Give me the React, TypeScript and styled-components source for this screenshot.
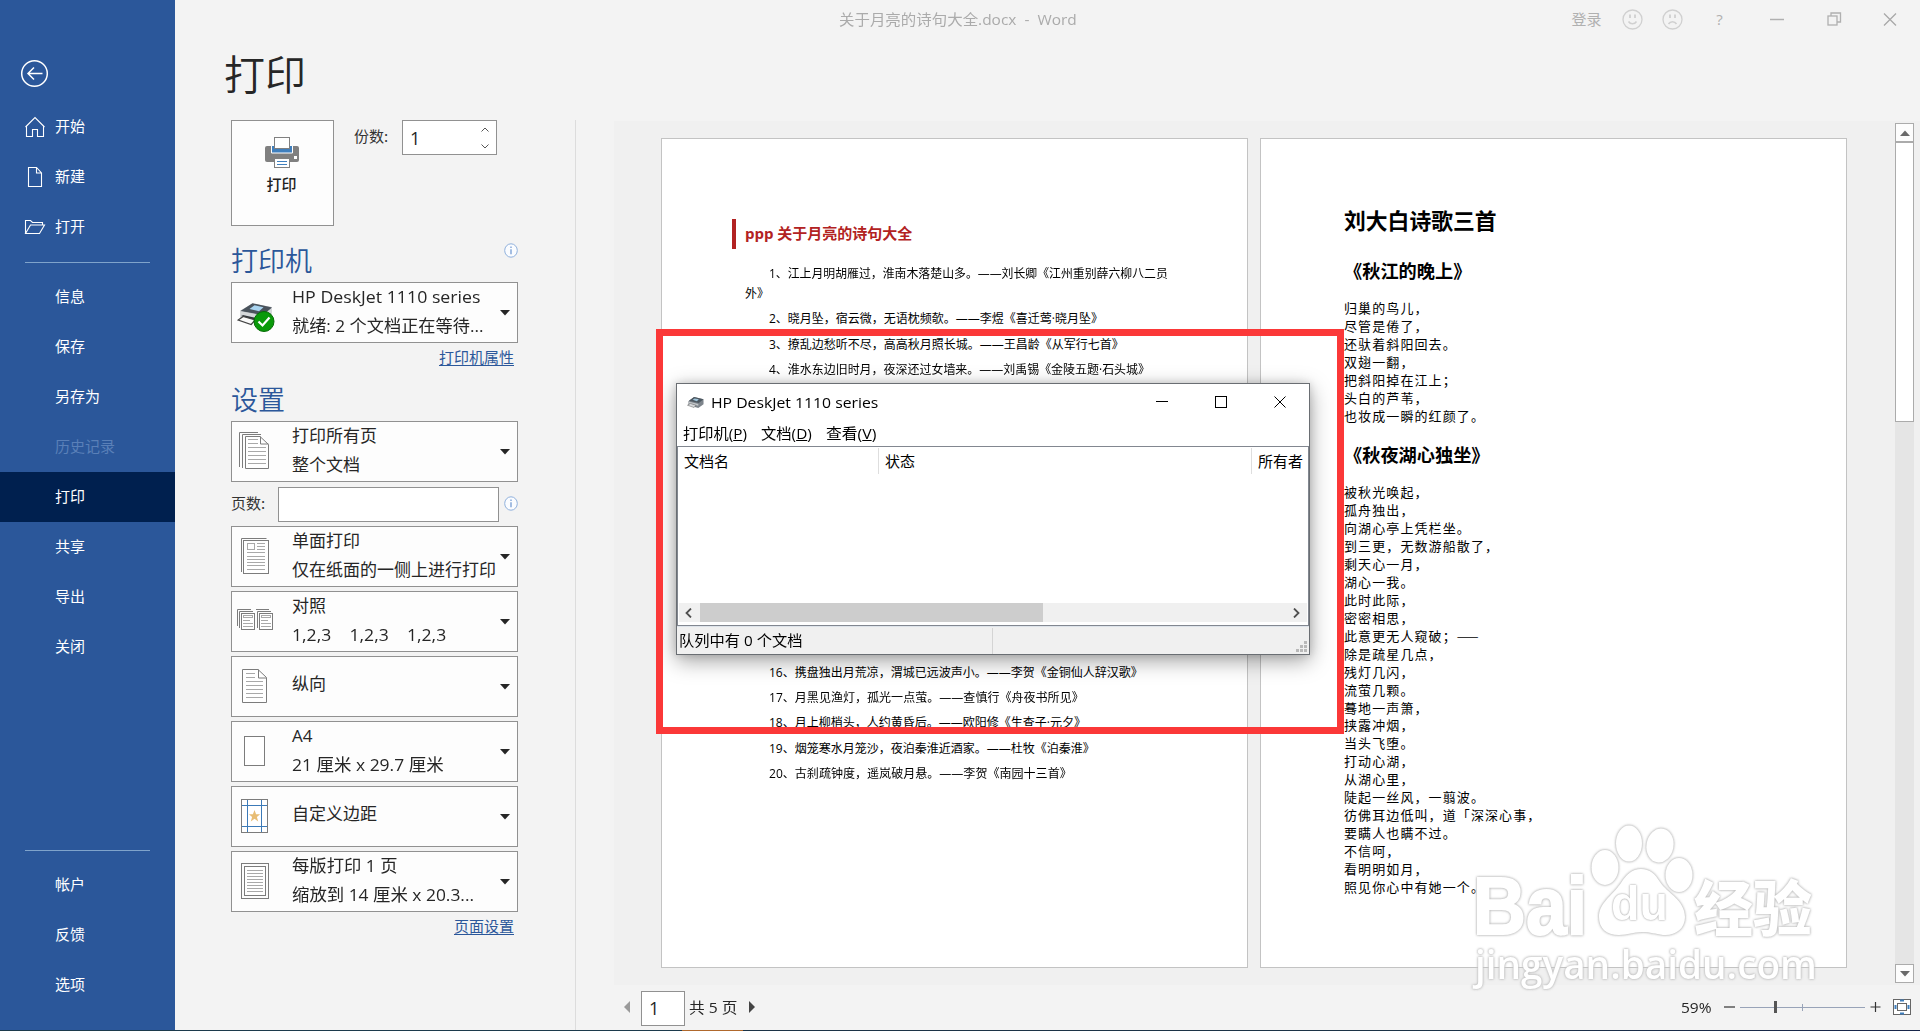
import React, { useLayoutEffect, useRef, useState } from "react";
import styled, { createGlobalStyle } from "styled-components";

const UI = `"Open Sans", "Noto Sans CJK SC", sans-serif`;
const CJK = `"Noto Sans CJK SC", sans-serif`;

const Global = createGlobalStyle`
  * { box-sizing: border-box; }
  html, body { margin: 0; padding: 0; overflow: hidden; background: #f3f3f3; }
  body { font-family: ${UI}; color: #262626; }
  svg { display: block; flex: none; }
`;

/* ---------- text fitted to a known advance width ---------- */
const FitBox = styled.span<{ $w: number }>`
  display: inline-block;
  flex: none;
  width: ${(p) => p.$w}px;
  white-space: pre;
  text-align: left;
`;
const FitInner = styled.span`
  display: inline-block;
  transform-origin: 0 50%;
`;
function Fit({ w, children }: { w: number; children: React.ReactNode }) {
  const ref = useRef<HTMLSpanElement>(null);
  const [scale, setScale] = useState(1);
  useLayoutEffect(() => {
    if (ref.current && ref.current.offsetWidth) setScale(w / ref.current.offsetWidth);
  }, [w]);
  return (
    <FitBox $w={w}>
      <FitInner ref={ref} style={{ transform: `scaleX(${scale})` }}>
        {children}
      </FitInner>
    </FitBox>
  );
}

/* ---------- frame ---------- */
const Screen = styled.div`
  position: relative;
  width: 1920px;
  height: 1031px;
  display: flex;
  flex-direction: column;
  overflow: hidden;
`;
const Shell = styled.div`
  flex: 1;
  min-height: 0;
  display: grid;
  grid-template-columns: 175px 1fr;
`;
const TaskEdge = styled.div`
  height: 1px;
  background: linear-gradient(90deg, #1c3a4c 0 682px, #b0682c 682px 743px, #1c3346 743px 1400px, #17254a);
`;

/* ---------- sidebar ---------- */
const Sidebar = styled.nav`
  background: #2b579a;
  display: flex;
  flex-direction: column;
  color: #fff;
`;
const BackRow = styled.div`
  height: 102px;
  padding: 59px 0 0 20px;
`;
const NavItem = styled.div<{ $active?: boolean; $dim?: boolean }>`
  height: 50px;
  display: flex;
  align-items: center;
  padding: 0 0 2px 24px;
  font: 15px/20px ${CJK};
  background: ${(p) => (p.$active ? "#00204f" : "transparent")};
  color: ${(p) => (p.$dim ? "#5a80b8" : "#fff")};
`;
const NavIcon = styled.span`
  width: 31px;
  display: flex;
  padding-top: 2px;
`;
const NavRule = styled.hr<{ $top: number; $bottom: number }>`
  width: 125px;
  height: 1px;
  border: 0;
  background: #7fa3cb;
  margin: ${(p) => p.$top}px 0 ${(p) => p.$bottom}px 25px;
`;

/* ---------- main ---------- */
const Main = styled.main`
  display: flex;
  flex-direction: column;
  background: #f3f3f3;
  min-width: 0;
`;
const TitleBar = styled.header`
  height: 40px;
  display: flex;
  align-items: center;
  padding: 0 2px 2px 664px;
  font: 15px/20px ${UI};
  color: #ababab;
`;
const Spacer = styled.div`
  flex: 1;
`;
const TitleCell = styled.div<{ $w: number }>`
  width: ${(p) => p.$w}px;
  display: flex;
  justify-content: center;
  align-items: center;
  color: #b0b0b0;
`;
const Heading = styled.h1`
  margin: 0;
  height: 80px;
  padding: 3px 0 0 49px;
  font: 350 41px/58px ${CJK};
  color: #262626;
`;
const Body = styled.div`
  flex: 1;
  min-height: 0;
  display: flex;
`;
const Settings = styled.section`
  width: 401px;
  padding: 0 57px 0 56px;
  border-right: 1px solid #dcdcdc;
  display: flex;
  flex-direction: column;
`;
const PrintRow = styled.div`
  display: flex;
  align-items: flex-start;
  height: 106px;
`;
const PrintButton = styled.button`
  width: 103px;
  height: 106px;
  border: 1px solid #919191;
  background: #fdfdfd;
  padding: 16px 2px 0 0;
  display: flex;
  flex-direction: column;
  align-items: center;
  gap: 5px;
  font: 500 15px/22px ${CJK};
  color: #222;
`;
const FieldLabel = styled.label<{ $w: number; $ml?: number }>`
  width: ${(p) => p.$w}px;
  margin-left: ${(p) => p.$ml ?? 0}px;
  font: 15px/32px ${CJK};
  color: #333;
`;
const Field = styled.div<{ $w: number }>`
  width: ${(p) => p.$w}px;
  height: 35px;
  border: 1px solid #919191;
  background: #fff;
  display: flex;
  align-items: center;
  justify-content: space-between;
  padding: 0 7px;
  font: 18px/32px ${UI};
`;
const Group = styled.div<{ $h: number; $pad: number }>`
  height: ${(p) => p.$h}px;
  padding-top: ${(p) => p.$pad}px;
  display: flex;
  justify-content: space-between;
  font: 350 27px/38px ${CJK};
  color: #2b579a;
`;
const InfoSlot = styled.span<{ $top: number }>`
  padding-top: ${(p) => p.$top}px;
`;
const Link = styled.a<{ $h: number }>`
  height: ${(p) => p.$h}px;
  align-self: flex-end;
  margin-right: 4px;
  font: 15px/28px ${CJK};
  color: #2b579a;
  text-decoration: underline;
  text-underline-offset: 2px;
`;
const Stack = styled.div`
  display: flex;
  flex-direction: column;
  gap: 4px;
`;
const PickerBox = styled.div`
  height: 61px;
  border: 1px solid #919191;
  background: #fdfdfd;
  display: flex;
  align-items: center;
  padding-right: 7px;
`;
const PickerIcon = styled.div`
  width: 60px;
  height: 59px;
  display: flex;
`;
const PickerText = styled.div<{ $single?: boolean }>`
  flex: 1;
  min-width: 0;
  height: 59px;
  margin-top: ${(p) => (p.$single ? 24 : -2)}px;
  font: 17px/29px ${UI};
  color: #262626;
  white-space: pre;
`;
const PagesRow = styled.div`
  display: flex;
  height: 44px;
  padding-top: 5px;
  align-items: flex-start;
`;

/* ---------- preview ---------- */
const PreviewCol = styled.section`
  flex: 1;
  min-width: 0;
  margin-left: 38px;
  padding-top: 1px;
  display: flex;
  flex-direction: column;
`;
const Canvas = styled.div`
  height: 864px;
  background: #f0f0f0;
  display: flex;
  padding: 2px 6px 2px 47px;
`;
const Sheet = styled.article<{ $w: number; $mr: number }>`
  width: ${(p) => p.$w}px;
  height: 830px;
  margin: 15px ${(p) => p.$mr}px 0 0;
  border: 1px solid #c3c3c3;
  background: #fff;
  color: #000;
`;
const PoemTitle = styled.h2`
  margin: 80px 0 15px 70px;
  height: 30px;
  border-left: 4px solid #b22222;
  padding-left: 9px;
  font: 700 15px/29px ${UI};
  color: #b22222;
`;
const Verses = styled.div`
  display: flex;
  flex-direction: column;
  gap: 5.25px;
  padding-left: 83px;
`;
const Verse = styled.p`
  margin: 0;
  padding-left: 24px;
  font: 12px/20px ${UI};
`;
const Wrapped = styled.span`
  display: block;
  margin-left: -24px;
`;
const Covered = styled.div`
  height: 272.5px;
`;
const BigTitle = styled.h2`
  margin: 66px 0 0 83px;
  font: 700 21.8px/30px ${CJK};
`;
const SubTitle = styled.h3<{ $mt: number; $mb: number }>`
  margin: ${(p) => p.$mt}px 0 ${(p) => p.$mb}px 83px;
  font: 700 18.2px/24px ${CJK};
`;
const Poem = styled.div`
  padding-left: 83px;
  font: 13px/17.92px ${CJK};
  letter-spacing: 1.1px;
  white-space: pre;
`;
const VScroll = styled.div`
  width: 19px;
  display: flex;
  flex-direction: column;
  background: #e5e5e5;
`;
const VButton = styled.div`
  height: 19px;
  border: 1px solid #ababab;
  background: #fdfdfd;
  display: flex;
  align-items: center;
  justify-content: center;
`;
const VThumb = styled.div`
  height: 280px;
  border: 1px solid #ababab;
  background: #fff;
`;
const Footer = styled.footer`
  flex: 1;
  display: flex;
  align-items: center;
  padding: 0 5px 1px 10px;
  font: 15px/20px ${UI};
`;
const PageInput = styled.div`
  width: 44px;
  height: 35px;
  margin: 2px 4px 0 11px;
  border: 1px solid #919191;
  background: #fff;
  padding-left: 7px;
  font: 18px/32px ${UI};
`;
const NextArrow = styled.span`
  margin-left: 12px;
`;

/* ---------- queue window ---------- */
const RedFrame = styled.div`
  position: absolute;
  left: 656px;
  top: 329px;
  width: 688px;
  height: 405px;
  border: 7px solid #fb3838;
`;
const Win = styled.section`
  position: absolute;
  left: 676px;
  top: 383px;
  width: 634px;
  height: 272px;
  border: 1px solid #6a6e73;
  background: #fff;
  box-shadow: 0 6px 20px rgba(0, 0, 0, 0.36), 0 0 8px rgba(0, 0, 0, 0.14);
  display: flex;
  flex-direction: column;
  color: #000;
  font: 15px/20px ${UI};
`;
const WinTitle = styled.div`
  height: 36px;
  display: flex;
  align-items: center;
  padding: 0 3px 0 10px;
  gap: 7px;
`;
const WinCtl = styled.div`
  width: 52px;
  display: flex;
  justify-content: center;
`;
const WinMenu = styled.div`
  height: 24px;
  display: flex;
  align-items: center;
  padding: 2px 0 0 6px;
  gap: 14px;
`;
const List = styled.div`
  margin-top: 2px;
  height: 180px;
  border: 1px solid #828790;
  display: flex;
  flex-direction: column;
`;
const ListHead = styled.div`
  display: grid;
  grid-template-columns: 201px 373px 1fr;
  height: 26px;
  margin-top: 1px;
`;
const HeadCell = styled.div<{ $last?: boolean }>`
  border-right: ${(p) => (p.$last ? 0 : 1)}px solid #dedede;
  padding-left: 6px;
  line-height: 26px;
`;
const HScroll = styled.div`
  margin: auto 1px 3px;
  height: 19px;
  background: #f0f0f0;
  display: flex;
  align-items: center;
  justify-content: space-between;
  padding: 0 7px 0 6px;
`;
const HThumb = styled.div`
  width: 343px;
  height: 19px;
  background: #cdcdcd;
  margin: 0 auto 0 8px;
`;
const Status = styled.div`
  flex: 1;
  background: #f0f0f0;
  border-top: 1px solid #dde3ea;
  display: flex;
  align-items: center;
  padding: 0 1px 0 2px;
`;
const StatusText = styled.div`
  width: 314px;
  height: 26px;
  line-height: 25px;
  border-right: 1px solid #d4d4d4;
`;
const Grip = styled.div`
  margin: auto 0 1px auto;
`;

/* ---------- watermark ---------- */
const Mark = styled.div`
  position: absolute;
  left: 1473px;
  top: 823px;
  width: 346px;
  height: 176px;
  color: #fff;
  display: flex;
  flex-direction: column;
  filter: drop-shadow(0 0 1px #b9b9b9) drop-shadow(0 0 1px #cfcfcf);
`;
const MarkTop = styled.div`
  height: 116px;
  display: grid;
  grid-template-columns: 117px 104px 1fr;
`;
const MarkBai = styled.div`
  font: 700 81px/80px "Liberation Sans", sans-serif;
  padding-top: 43px;
  -webkit-text-stroke: 2px #fff;
`;
const MarkPaw = styled.div`
  display: grid;
  > * {
    grid-area: 1 / 1;
  }
`;
const MarkDu = styled.div`
  padding: 52px 0 0 21px;
  font: 700 49px/56px "Liberation Sans", sans-serif;
  text-shadow: 0 0 2px #aaa, 0 0 2px #bbb;
`;
const MarkWord = styled.div`
  padding: 42px 0 0 0;
  font: 900 60px/80px ${CJK};
`;
const MarkUrl = styled.div`
  font: 600 40px/56px "Open Sans", sans-serif;
  margin: -3px 0 0 2px;
`;

/* ---------- icons ---------- */
const Info = () => (
  <svg width="14" height="15" viewBox="0 0 14 15">
    <ellipse cx="7" cy="7.5" rx="6.3" ry="6.7" fill="#fafcff" stroke="#8fb0dc" />
    <path d="M7 6.3v5M7 3.6v1.4" stroke="#7ea3d6" strokeWidth="1.4" />
  </svg>
);
const Caret = () => (
  <svg width="10" height="6" viewBox="0 0 10 6">
    <path d="M0 0h10L5 5.4z" fill="#262626" />
  </svg>
);
const Lines = ({ x1, x2, ys }: { x1: number; x2: number; ys: number[] }) => (
  <path d={ys.map((y) => `M${x1} ${y}H${x2}`).join("")} stroke="#a9a9a9" fill="none" />
);
const G = "#7c7c7c";
const PrinterSmall = ({ w, h }: { w: number; h: number }) => (
  <svg width={w} height={h} viewBox="0 0 36 24" preserveAspectRatio="none">
    <path d="M3 9 15 0l20 5v11l-11 8-21-6z" fill="#7d848b" />
    <path d="M4 8 15 0l20 5-10 8z" fill="#4d5861" />
    <path d="M12 6l4-3 9 2-4 4z" fill="#9fc4da" />
    <path d="M3 10l21 5v4L3 14z" fill="#c3c7ca" />
    <path d="M1 18l6-4 12 4-4 5z" fill="#d8dadc" stroke="#555" />
  </svg>
);
const PrinterStatus = () => (
  <svg width="60" height="59" viewBox="0 0 60 59">
    <g transform="translate(5.500 19.500)">
      <path d="M3 8 15 1l19 3.500v13L22 21 3 17z" fill="#b4b8bc" />
      <path d="M3 8.500 15 .8l19.500 4.200-9 7.500z" fill="#4a535c" />
      <path d="M12 6.500l5-3.800 9 2-4.500 4z" fill="#a9d4f0" />
      <path d="M3 8.800l22 4.200 9.500-7.500v4L25 16.500 3 12z" fill="#d5d8da" />
      <path d="M5 12.500l14 3v4l-14-3z" fill="#2b3036" />
      <path d="M.7 17.500l5-3.500 12 3.500-4 4.500z" fill="#fafafa" stroke="#444" strokeWidth="1.200" />
    </g>
    <ellipse cx="32" cy="38.500" rx="10" ry="10" fill="#0a9a0a" stroke="#066c06" />
    <path d="M26.500 38.500l4 4 7-8" fill="none" stroke="#fff" strokeWidth="2.200" />
  </svg>
);
const AllPages = () => (
  <svg width="60" height="59" viewBox="0 0 60 59" fill="none" stroke={G}>
    <path d="M7.500 45V10.500H26M10.500 46V12.500H29" />
    <path d="M13.500 14.500H28l8.500 8V46.500h-23z" fill="#fff" />
    <path d="M28.500 14.500v7.500h8" />
    <Lines x1={16} x2={26} ys={[17.5, 21.5]} />
    <Lines x1={16} x2={34} ys={[25.5, 29.5, 33.5, 37.5, 41.5]} />
  </svg>
);
const OneSide = () => (
  <svg width="60" height="59" viewBox="0 0 60 59" fill="none" stroke={G}>
    <path d="M9.500 45V11.500H34.500" />
    <rect x="11.500" y="13.500" width="25" height="33" fill="#fff" />
    <rect x="15.500" y="16.500" width="7" height="6" stroke="#a9a9a9" />
    <Lines x1={25} x2={33} ys={[16.5, 19.5, 22.5]} />
    <Lines x1={15} x2={33} ys={[25.5, 29.5, 32.5, 35.5, 38.5, 42.5]} />
  </svg>
);
const Collate = () => (
  <svg width="60" height="59" viewBox="0 0 60 59" fill="none" stroke={G}>
    {[0, 18].map((dx) => (
      <g key={dx} transform={`translate(${dx} 0)`}>
        {dx === 0 ? <path d="M5.500 34V17.500H19M7.500 36V19.500H21" /> : <path d="M6 17.500H19M7.500 36V19.500H21" />}
        <rect x="9.500" y="21.500" width="13" height="16" fill="#fff" />
        <rect x="11.500" y="23.500" width="9" height="2" stroke="#a9a9a9" />
        <Lines x1={11} x2={18} ys={[28.5]} />
        <Lines x1={11} x2={21} ys={[31.5, 34.5]} />
      </g>
    ))}
  </svg>
);
const Portrait = () => (
  <svg width="60" height="59" viewBox="0 0 60 59" fill="none" stroke={G}>
    <path d="M10.500 12.500H26l8.500 8V45.500h-24z" fill="#fff" />
    <path d="M26.500 12.500v8.500h8" />
    <Lines x1={14} x2={23} ys={[16.5, 20.5]} />
    <Lines x1={14} x2={31} ys={[24.5, 28.5, 32.5, 36.5, 40.5]} />
  </svg>
);
const Paper = () => (
  <svg width="60" height="59" viewBox="0 0 60 59" fill="none" stroke={G}>
    <rect x="12.500" y="14.500" width="20" height="29" fill="#fff" />
  </svg>
);
const Margins = () => (
  <svg width="60" height="59" viewBox="0 0 60 59" fill="none">
    <rect x="9.500" y="12.500" width="26" height="33" stroke={G} fill="#fff" />
    <path d="M15.500 13v32M29.500 13v32M10 18.500h25M10 39.500h25" stroke="#3c7ab8" />
    <path d="M22.500 23l1.600 4.200h4l-3.200 2.700 1.300 4.600-3.700-2.700-3.700 2.700 1.300-4.600-3.200-2.700h4z" fill="#e8bd74" />
  </svg>
);
const PerSheet = () => (
  <svg width="60" height="59" viewBox="0 0 60 59" fill="none" stroke={G}>
    <rect x="9.500" y="11.500" width="27" height="35" />
    <rect x="12.500" y="14.500" width="21" height="29" fill="#fff" />
    <Lines x1={15} x2={31} ys={[18.5, 21.5, 24.5, 27.5, 30.5, 33.5, 36.5, 39.5]} />
  </svg>
);
const Face = ({ sad }: { sad?: boolean }) => (
  <svg width="21" height="21" viewBox="0 0 21 21" fill="none" stroke="#d0d0d0" strokeWidth="1.300">
    <circle cx="10.500" cy="10.500" r="9.500" />
    <path d="M8 5.500v3.500M13 5.500v3.500" strokeWidth="1.800" />
    <path d={sad ? "M6.500 15c2-3 6-3 8 0" : "M6.500 12.500c2 3 6 3 8 0"} strokeWidth="1.600" />
  </svg>
);

type PickerProps = { icon: React.ReactNode; children: React.ReactNode; single?: boolean };
const Picker = ({ icon, children, single }: PickerProps) => (
  <PickerBox>
    <PickerIcon>{icon}</PickerIcon>
    <PickerText $single={single}>{children}</PickerText>
    <Caret />
  </PickerBox>
);

const poemOne = ["归巢的鸟儿，", "尽管是倦了，", "还驮着斜阳回去。", "双翅一翻，", "把斜阳掉在江上；", "头白的芦苇，", "也妆成一瞬的红颜了。"];
const poemTwo = [
  "被秋光唤起，", "孤舟独出，", "向湖心亭上凭栏坐。", "到三更，无数游船散了，", "剩天心一月，", "湖心一我。", "此时此际，", "密密相思，",
  "此意更无人窥破；——", "除是疏星几点，", "残灯几闪，", "流萤几颗。", "蓦地一声箫，", "挟露冲烟，", "当头飞堕。", "打动心湖，", "从湖心里，",
  "陡起一丝风，一翦波。", "彷佛耳边低叫，道「深深心事，", "要瞒人也瞒不过。", "不信呵，", "看明明如月，", "照见你心中有她一个。",
];
const versesTop: [string, number][] = [
  ["2、晓月坠，宿云微，无语枕频欹。——李煜《喜迁莺·晓月坠》", 334],
  ["3、撩乱边愁听不尽，高高秋月照长城。——王昌龄《从军行七首》", 355],
  ["4、淮水东边旧时月，夜深还过女墙来。——刘禹锡《金陵五题·石头城》", 381],
];
const versesEnd: [string, number][] = [
  ["16、携盘独出月荒凉，渭城已远波声小。——李贺《金铜仙人辞汉歌》", 374],
  ["17、月黑见渔灯，孤光一点萤。——查慎行《舟夜书所见》", 315],
  ["18、月上柳梢头，人约黄昏后。——欧阳修《生查子·元夕》", 317],
  ["19、烟笼寒水月笼沙，夜泊秦淮近酒家。——杜牧《泊秦淮》", 326],
  ["20、古刹疏钟度，遥岚破月悬。——李贺《南园十三首》", 303],
];

export default function App() {
  return (
    <Screen>
      <Global />
      <Shell>
        <Sidebar>
          <BackRow>
            <svg width="29" height="29" viewBox="0 0 29 29" fill="none" stroke="#fff" strokeWidth="1.500">
              <circle cx="14.500" cy="14.500" r="12.800" />
              <path d="M22.500 14.500H8M14 8.500l-6 6 6 6" />
            </svg>
          </BackRow>
          <NavItem>
            <NavIcon>
              <svg width="22" height="22" viewBox="0 0 22 22" fill="none" stroke="#fff" strokeWidth="1.100">
                <path d="M1.500 11 11 1.500 20.500 11M2.500 10v10.500H8.500v-7h5v7h6V10" />
              </svg>
            </NavIcon>
            开始
          </NavItem>
          <NavItem>
            <NavIcon>
              <svg width="22" height="22" viewBox="0 0 22 22" fill="none" stroke="#fff" strokeWidth="1.100">
                <path d="M4.500 1.500h8l5 5.500v13.500h-13zM12.500 1.500V7h5" />
              </svg>
            </NavIcon>
            新建
          </NavItem>
          <NavItem>
            <NavIcon>
              <svg width="22" height="22" viewBox="0 0 22 22" fill="none" stroke="#fff" strokeWidth="1.100">
                <path d="M1.500 17.500v-13h5l2 2h10v2.500M1.500 17.500l5-8.500h14l-5 8.500z" />
              </svg>
            </NavIcon>
            打开
          </NavItem>
          <NavRule $top={10} $bottom={9} />
          {["信息", "保存", "另存为", "历史记录", "打印", "共享", "导出", "关闭"].map((t) => (
            <NavItem key={t} $active={t === "打印"} $dim={t === "历史记录"}>
              <NavIcon />
              {t}
            </NavItem>
          ))}
          <NavRule $top={178} $bottom={9} />
          {["帐户", "反馈", "选项"].map((t) => (
            <NavItem key={t}>
              <NavIcon />
              {t}
            </NavItem>
          ))}
        </Sidebar>

        <Main>
          <TitleBar>
            <Fit w={238}>关于月亮的诗句大全.docx  -  Word</Fit>
            <Spacer />
            <TitleCell $w={53}>登录</TitleCell>
            <TitleCell $w={39}><Face /></TitleCell>
            <TitleCell $w={40}><Face sad /></TitleCell>
            <TitleCell $w={55}>?</TitleCell>
            <TitleCell $w={60}>
              <svg width="14" height="3"><path d="M0 1.500h14" stroke="#b0b0b0" strokeWidth="1.500" /></svg>
            </TitleCell>
            <TitleCell $w={55}>
              <svg width="15" height="14" viewBox="0 0 15 14" fill="none" stroke="#b0b0b0" strokeWidth="1.300">
                <rect x="1" y="4" width="9" height="9" />
                <path d="M4 4V1h9.500v9H10" />
              </svg>
            </TitleCell>
            <TitleCell $w={56}>
              <svg width="14" height="13" viewBox="0 0 14 13" stroke="#a8a8a8" strokeWidth="1.300">
                <path d="M1 .5l12 12M13 .5l-12 12" />
              </svg>
            </TitleCell>
          </TitleBar>
          <Heading>打印</Heading>
          <Body>
            <Settings>
              <PrintRow>
                <PrintButton>
                  <svg width="34" height="31" viewBox="0 0 34 31">
                    <rect x="0" y="9" width="34" height="16" rx="2" fill="#808080" />
                    <path d="M6.500 8.500h21v7.500h-21z" fill="#3f7fbd" stroke="#fff" />
                    <rect x="9.500" y=".5" width="15" height="11" fill="#fff" stroke="#808080" />
                    <rect x="9.500" y="21.500" width="15" height="9" fill="#fff" stroke="#808080" />
                    <path d="M12 24.500h10M12 27.500h10" stroke="#3f7fbd" />
                    <rect x="29" y="19" width="3" height="3" fill="#fff" />
                  </svg>
                  打印
                </PrintButton>
                <FieldLabel $w={48} $ml={20}>份数:</FieldLabel>
                <Field $w={95}>
                  1
                  <svg width="8" height="22" viewBox="0 0 8 22" fill="none" stroke="#555">
                    <path d="M.5 4.500 4 1l3.500 3.500M.5 17.500 4 21l3.500-3.500" />
                  </svg>
                </Field>
              </PrintRow>
              <Group $h={56} $pad={15}>
                打印机
                <InfoSlot $top={2}><Info /></InfoSlot>
              </Group>
              <Picker icon={<PrinterStatus />}>
                <Fit w={189}>HP DeskJet 1110 series</Fit>
                {"\n"}
                <Fit w={191}>就绪: 2 个文档正在等待...</Fit>
              </Picker>
              <Link $h={30}>打印机属性</Link>
              <Group $h={48} $pad={7}>设置</Group>
              <Picker icon={<AllPages />}>{"打印所有页\n整个文档"}</Picker>
              <PagesRow>
                <FieldLabel $w={47}>页数:</FieldLabel>
                <Field $w={221} />
                <Spacer />
                <InfoSlot $top={9}><Info /></InfoSlot>
              </PagesRow>
              <Stack>
                <Picker icon={<OneSide />}>{"单面打印\n仅在纸面的一侧上进行打印"}</Picker>
                <Picker icon={<Collate />}>
                  {"对照\n"}
                  <Fit w={154}>1,2,3    1,2,3    1,2,3</Fit>
                </Picker>
                <Picker icon={<Portrait />} single>纵向</Picker>
                <Picker icon={<Paper />}>
                  {"A4\n"}
                  <Fit w={152}>21 厘米 x 29.7 厘米</Fit>
                </Picker>
                <Picker icon={<Margins />} single>自定义边距</Picker>
                <Picker icon={<PerSheet />}>
                  <Fit w={106}>每版打印 1 页</Fit>
                  {"\n"}
                  <Fit w={182}>缩放到 14 厘米 x 20.3...</Fit>
                </Picker>
              </Stack>
              <Link $h={30}>页面设置</Link>
            </Settings>

            <PreviewCol>
              <Canvas>
                <Sheet $w={587} $mr={12}>
                  <PoemTitle><Fit w={167}>ppp 关于月亮的诗句大全</Fit></PoemTitle>
                  <Verses>
                    <Verse>
                      <Fit w={399}>1、江上月明胡雁过，淮南木落楚山多。——刘长卿《江州重别薛六柳八二员</Fit>
                      <Wrapped>外》</Wrapped>
                    </Verse>
                    {versesTop.map(([t, w]) => (
                      <Verse key={t}><Fit w={w}>{t}</Fit></Verse>
                    ))}
                    <Covered />
                    {versesEnd.map(([t, w]) => (
                      <Verse key={t}><Fit w={w}>{t}</Fit></Verse>
                    ))}
                  </Verses>
                </Sheet>
                <Sheet $w={587} $mr={0}>
                  <BigTitle>刘大白诗歌三首</BigTitle>
                  <SubTitle $mt={23} $mb={17}>《秋江的晚上》</SubTitle>
                  <Poem>{poemOne.join("\n")}</Poem>
                  <SubTitle $mt={18} $mb={17}>《秋夜湖心独坐》</SubTitle>
                  <Poem>{poemTwo.join("\n")}</Poem>
                </Sheet>
                <Spacer />
                <VScroll>
                  <VButton><svg width="10" height="6"><path d="M0 6h10L5 .5z" fill="#6a6a6a" /></svg></VButton>
                  <VThumb />
                  <Spacer />
                  <VButton><svg width="10" height="6"><path d="M0 0h10L5 5.500z" fill="#6a6a6a" /></svg></VButton>
                </VScroll>
              </Canvas>
              <Footer>
                <svg width="6" height="12"><path d="M6 0v12L0 6z" fill="#9a9a9a" /></svg>
                <PageInput>1</PageInput>
                <Fit w={48}>共 5 页</Fit>
                <NextArrow><svg width="6" height="12"><path d="M0 0v12l6-6z" fill="#444" /></svg></NextArrow>
                <Spacer />
                <Fit w={31}>59%</Fit>
                <svg width="203" height="20" viewBox="0 0 203 20" fill="none">
                  <path d="M12 10h11" stroke="#333" strokeWidth="1.200" />
                  <path d="M28 10.500h125" stroke="#98a3b8" />
                  <path d="M90.500 7v7" stroke="#98a3b8" />
                  <rect x="62" y="4" width="3" height="12" fill="#555" />
                  <path d="M158.500 10h10M163.500 5v10" stroke="#333" strokeWidth="1.200" />
                  <rect x="181.500" y="2.500" width="17" height="15" fill="#fff" stroke="#666" />
                  <rect x="185.500" y="6.500" width="9" height="7" stroke="#666" />
                  <path d="M188 3.500h4M188 16.500h4M183.500 8v4M196.500 8v4" stroke="#3f7fbd" strokeWidth="2" />
                </svg>
              </Footer>
            </PreviewCol>
          </Body>
        </Main>
      </Shell>
      <TaskEdge />

      <Win>
        <WinTitle>
          <PrinterSmall w={17} h={11} />
          <Fit w={167}>HP DeskJet 1110 series</Fit>
          <Spacer />
          <WinCtl><svg width="12" height="2"><path d="M0 .5h12" stroke="#000" /></svg></WinCtl>
          <WinCtl><svg width="12" height="12"><rect x=".5" y=".5" width="11" height="11" fill="none" stroke="#000" /></svg></WinCtl>
          <WinCtl><svg width="12" height="12"><path d="M.5.5l11 11M11.500.5l-11 11" stroke="#000" /></svg></WinCtl>
        </WinTitle>
        <WinMenu>
          <Fit w={64}>打印机(<u>P</u>)</Fit>
          <Fit w={51}>文档(<u>D</u>)</Fit>
          <Fit w={50.5}>查看(<u>V</u>)</Fit>
        </WinMenu>
        <List>
          <ListHead>
            <HeadCell>文档名</HeadCell>
            <HeadCell>状态</HeadCell>
            <HeadCell $last>所有者</HeadCell>
          </ListHead>
          <HScroll>
            <svg width="7" height="10"><path d="M6 .5L1.500 5 6 9.500" fill="none" stroke="#505050" strokeWidth="1.800" /></svg>
            <HThumb />
            <svg width="7" height="10"><path d="M1 .5L5.500 5 1 9.500" fill="none" stroke="#505050" strokeWidth="1.800" /></svg>
          </HScroll>
        </List>
        <Status>
          <StatusText><Fit w={123}>队列中有 0 个文档</Fit></StatusText>
          <Grip>
            <svg width="12" height="12" fill="#b8b8b8">
              {[[8, 0], [4, 4], [8, 4], [0, 8], [4, 8], [8, 8]].map(([x, y]) => (
                <rect key={`${x}-${y}`} x={x} y={y} width="3" height="3" />
              ))}
            </svg>
          </Grip>
        </Status>
      </Win>
      <RedFrame />

      <Mark>
        <MarkTop>
          <MarkBai><Fit w={114}>Bai</Fit></MarkBai>
          <MarkPaw>
            <svg width="104" height="116" viewBox="0 0 104 116" fill="#fff">
              <ellipse cx="15" cy="44.500" rx="13.500" ry="17.500" />
              <ellipse cx="39" cy="20.500" rx="13" ry="18" />
              <ellipse cx="70" cy="22.500" rx="13.500" ry="17" transform="rotate(10 70 22.500)" />
              <ellipse cx="89" cy="52" rx="13.500" ry="17" />
              <path d="M51 46c9 0 14 5 19 13 7 11 25 18 25 35 0 12-10 19-22 18-8-1-12-3-21-3s-14 3-23 3C16 112 9 105 9 94c0-14 12-20 22-34 5-8 11-14 20-14z" />
            </svg>
            <MarkDu><Fit w={57}>du</Fit></MarkDu>
          </MarkPaw>
          <MarkWord><Fit w={118}>经验</Fit></MarkWord>
        </MarkTop>
        <MarkUrl><Fit w={342}>jingyan.baidu.com</Fit></MarkUrl>
      </Mark>
    </Screen>
  );
}
